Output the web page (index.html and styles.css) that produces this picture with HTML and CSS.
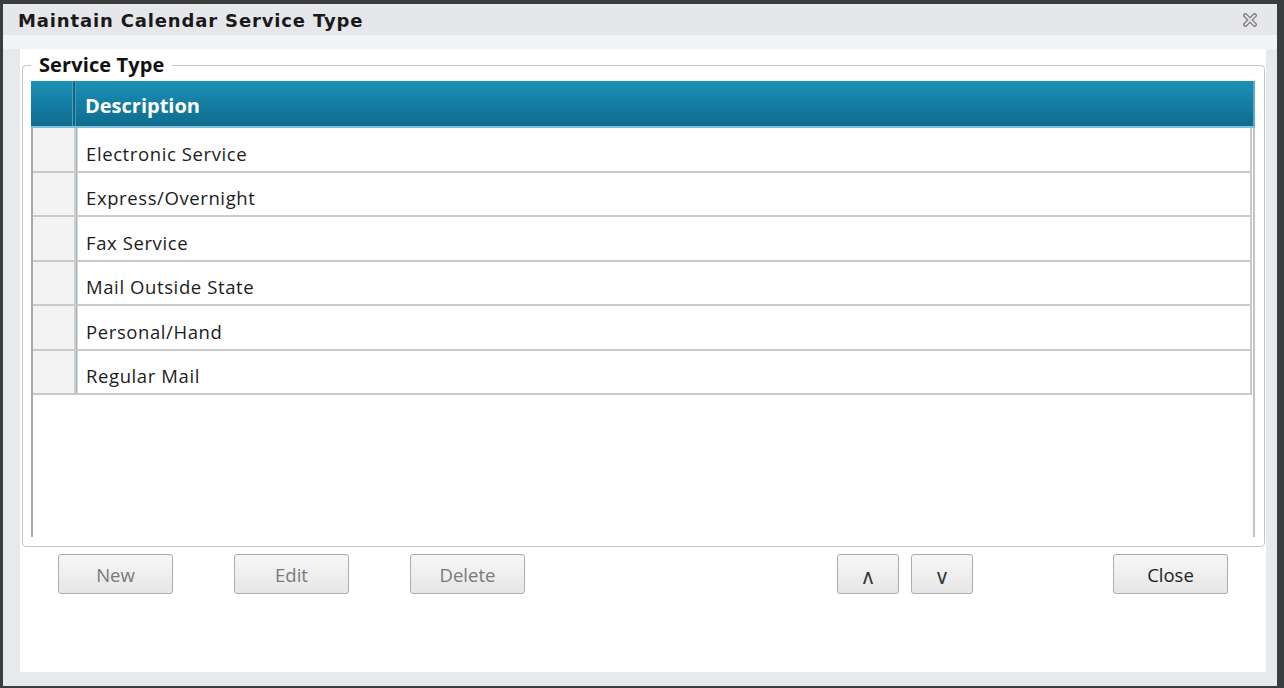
FILE: index.html
```html
<!DOCTYPE html>
<html lang="en">
  <head>
    <meta charset="UTF-8" />
    <title>Maintain Calendar Service Type</title>
    <link rel="stylesheet" href="styles.css">
  </head>
  <body>
    <div class="window">
      <div class="titlebar">
        <span class="title">Maintain Calendar Service Type</span>
        <svg class="close-x" width="14" height="14" viewBox="0 0 14 14">
          <path d="M2.5 2.5 L11.5 11.5 M11.5 2.5 L2.5 11.5" stroke="#7d7d7d" stroke-width="4.5" stroke-linecap="square" fill="none"/>
          <path d="M2.5 2.5 L11.5 11.5 M11.5 2.5 L2.5 11.5" stroke="#e9e9e9" stroke-width="1.8" stroke-linecap="square" fill="none"/>
        </svg>
      </div>

      <div class="window-body">
        <div class="pane">
          <fieldset class="group">
            <legend>Service Type</legend>

            <!-- service type grid -->
            <div class="grid">
              <div class="row head">
                <div class="selector"></div>
                <div class="split"></div>
                <div class="cell">Description</div>
              </div>
              <div class="row">
                <div class="selector"></div>
                <div class="split"></div>
                <div class="cell">Electronic Service</div>
              </div>
              <div class="row">
                <div class="selector"></div>
                <div class="split"></div>
                <div class="cell">Express/Overnight</div>
              </div>
              <div class="row">
                <div class="selector"></div>
                <div class="split"></div>
                <div class="cell">Fax Service</div>
              </div>
              <div class="row">
                <div class="selector"></div>
                <div class="split"></div>
                <div class="cell">Mail Outside State</div>
              </div>
              <div class="row">
                <div class="selector"></div>
                <div class="split"></div>
                <div class="cell">Personal/Hand</div>
              </div>
              <div class="row">
                <div class="selector"></div>
                <div class="split"></div>
                <div class="cell">Regular Mail</div>
              </div>
            </div>
          </fieldset>

          <div class="actions">
            <button class="btn" disabled>New</button>
            <button class="btn" disabled>Edit</button>
            <button class="btn" disabled>Delete</button>
            <button class="btn small">&#x039B;</button>
            <button class="btn small">V</button>
            <button class="btn close">Close</button>
          </div>
        </div>
      </div>
    </div>
  </body>
</html>
```

FILE: styles.css
```css
body {
  margin: 0;
  height: 688px;
  background: #3b3c3e;
  overflow: hidden;
  font-family: "Open Sans", "Liberation Sans", sans-serif;
}

.window {
  margin: 4px 7px 0 3px;
  height: 682px;
  background: #e8e9eb;
  display: flex;
  flex-direction: column;
}

.titlebar {
  height: 31px;
  box-sizing: border-box;
  display: flex;
  align-items: center;
  padding: 1px 20px 0 15px;
  background: #e6e7ea;
}

.title {
  font-family: "DejaVu Sans", sans-serif;
  font-weight: bold;
  font-size: 18px;
  letter-spacing: 0.85px;
  color: #1a1a1a;
  flex: 1;
}

.window-body {
  flex: 1;
  display: flex;
  padding: 14px 11px 14px 17px;
  background: linear-gradient(#f2f3f5 14px, #e8e9eb 14px);
}

.pane {
  flex: 1;
  background: #fff;
  display: flex;
  flex-direction: column;
}

.group {
  margin: 6px 1px 0 2px;
  padding: 6px 9px 9px 8px;
  border: 1px solid #c6c6c6;
  border-radius: 4px;
}

.group legend {
  font-weight: bold;
  font-size: 20px;
  line-height: 20px;
  letter-spacing: 0.1px;
  color: #111;
  margin-left: 0;
  padding: 0 8px;
}

.grid {
  height: 456px;
  border-left: 2px solid #a9a9a9;
  border-right: 2px solid #c4c4c4;
  box-sizing: border-box;
}

.row {
  display: flex;
  height: 44.5px;
  border-bottom: 2px solid #c9c9c9;
  box-sizing: border-box;
  margin-right: 1px;
  border-right: 2px solid #c9c9c9;
}

.row .selector {
  width: 41px;
  background: #f3f3f3;
  border-right: 1px solid #cfcfcf;
}

.row .split {
  width: 3px;
  background: linear-gradient(90deg, #d8d8d8, #a7b3bd 50%, #e4ebf0);
}

.row .cell {
  flex: 1;
  padding: 8px 0 0 8px;
  display: flex;
  align-items: center;
  font-size: 18.5px;
  letter-spacing: 0.6px;
  color: #1c1c1c;
}

.row.head {
  height: 47px;
  margin: 0 -2px;
  border: none;
  background: linear-gradient(#1b90b7, #0e6c8e);
  border-bottom: 2px solid #7fc0d6;
}

.row.head .selector {
  background: none;
  border-right: 1px solid #4aa3c2;
}

.row.head .split {
  background: linear-gradient(90deg, #0d6585, #0d6585 50%, #69b4ce);
}

.row.head .cell {
  color: #fff;
  font-weight: bold;
  font-size: 20px;
  letter-spacing: 0;
  padding: 3px 0 0 9px;
  border-right: 2px solid #5aaac6;
}

.actions {
  display: flex;
  padding: 7px 38px 0 38px;
}

.btn {
  width: 115px;
  height: 40px;
  margin-right: 61px;
  border: 1px solid #acacac;
  border-radius: 3px;
  background: linear-gradient(#f7f7f7, #e6e6e6);
  font-family: "Open Sans", sans-serif;
  font-size: 18.5px;
  color: #222;
  padding: 0;
}

.btn:disabled {
  color: #7a7a7a;
}

.btn:nth-child(3) {
  margin-right: 312px;
}

.btn.small {
  width: 62px;
  margin-right: 12px;
  font-size: 16px;
  font-weight: 600;
  color: #333;
  padding-top: 7px;
}

.btn.close {
  margin: 0 0 0 auto;
}
```
